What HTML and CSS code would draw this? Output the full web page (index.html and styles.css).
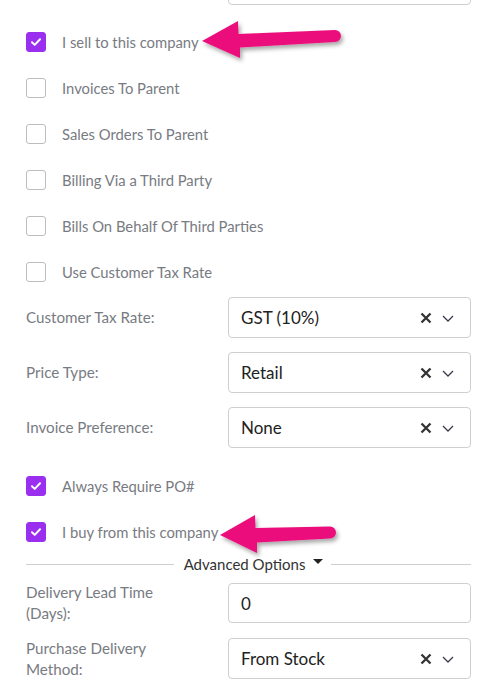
FILE: index.html
```html
<!DOCTYPE html>
<html>
<head>
<meta charset="utf-8">
<link rel="stylesheet" href="styles.css">
</head>
<body>
<div class="form">
  <div class="field field-cut">
    <div class="label"></div>
    <div class="control"></div>
  </div>

  <div class="checks checks-first">
    <label class="check"><span class="box on"><svg viewBox="0 0 20 20"><path d="M5.5 10.2 L8.6 13.2 L14.5 7" /></svg></span><span class="text">I sell to this company</span></label>
    <label class="check"><span class="box"></span><span class="text">Invoices To Parent</span></label>
    <label class="check"><span class="box"></span><span class="text">Sales Orders To Parent</span></label>
    <label class="check"><span class="box"></span><span class="text">Billing Via a Third Party</span></label>
    <label class="check"><span class="box"></span><span class="text">Bills On Behalf Of Third Parties</span></label>
    <label class="check"><span class="box"></span><span class="text">Use Customer Tax Rate</span></label>
  </div>

  <div class="fields fields-first">
    <div class="field">
      <div class="label">Customer Tax Rate:</div>
      <div class="control select"><span class="value">GST (10%)</span><span class="icons"><svg class="clear" viewBox="0 0 12 12"><path d="M1.5 1.5 L10.5 10.5 M10.5 1.5 L1.5 10.5"/></svg><svg class="chev" viewBox="0 0 12 12"><path d="M1 4 L6 9 L11 4"/></svg></span></div>
    </div>
    <div class="field">
      <div class="label">Price Type:</div>
      <div class="control select"><span class="value">Retail</span><span class="icons"><svg class="clear" viewBox="0 0 12 12"><path d="M1.5 1.5 L10.5 10.5 M10.5 1.5 L1.5 10.5"/></svg><svg class="chev" viewBox="0 0 12 12"><path d="M1 4 L6 9 L11 4"/></svg></span></div>
    </div>
    <div class="field">
      <div class="label">Invoice Preference:</div>
      <div class="control select"><span class="value">None</span><span class="icons"><svg class="clear" viewBox="0 0 12 12"><path d="M1.5 1.5 L10.5 10.5 M10.5 1.5 L1.5 10.5"/></svg><svg class="chev" viewBox="0 0 12 12"><path d="M1 4 L6 9 L11 4"/></svg></span></div>
    </div>
  </div>

  <div class="checks checks-second">
    <label class="check"><span class="box on"><svg viewBox="0 0 20 20"><path d="M5.5 10.2 L8.6 13.2 L14.5 7" /></svg></span><span class="text">Always Require PO#</span></label>
    <label class="check"><span class="box on"><svg viewBox="0 0 20 20"><path d="M5.5 10.2 L8.6 13.2 L14.5 7" /></svg></span><span class="text">I buy from this company</span></label>
  </div>

  <div class="divider">
    <span class="line line-left"></span>
    <span class="divider-label">Advanced Options <span class="caret"></span></span>
    <span class="line line-right"></span>
  </div>

  <div class="fields fields-last">
    <div class="field field-short">
      <div class="label label-2">Delivery Lead Time<br>(Days):</div>
      <div class="control input"><span class="value">0</span></div>
    </div>
    <div class="field">
      <div class="label label-2">Purchase Delivery<br>Method:</div>
      <div class="control select"><span class="value">From Stock</span><span class="icons"><svg class="clear" viewBox="0 0 12 12"><path d="M1.5 1.5 L10.5 10.5 M10.5 1.5 L1.5 10.5"/></svg><svg class="chev" viewBox="0 0 12 12"><path d="M1 4 L6 9 L11 4"/></svg></span></div>
    </div>
  </div>
</div>

<svg class="arrows" viewBox="0 0 491 685" width="491" height="685">
  <defs>
    <filter id="sh" x="-20%" y="-40%" width="140%" height="180%">
      <feDropShadow dx="2" dy="3" stdDeviation="2" flood-color="#000" flood-opacity="0.35"/>
    </filter>
  </defs>
  <path filter="url(#sh)" fill="#ec0f7c" d="M202 41 L238 21 L238.5 34 L335 30 A6 6 0 0 1 335 42 L240 47.5 L240 58 Z"/>
  <path filter="url(#sh)" fill="#ec0f7c" d="M220 535 L255 515 L255.5 528 L330 526.5 A6 6 0 0 1 330 538.5 L257 542.5 L257 553 Z"/>
</svg>
</body>
</html>
```

FILE: styles.css
```css
* { box-sizing: border-box; }

html, body {
  margin: 0;
  padding: 0;
  background: #ffffff;
}

body {
  width: 491px;
  height: 685px;
  overflow: hidden;
  position: relative;
  font-family: Lato, "Open Sans", sans-serif;
}

.form {
  padding: 0 20px 0 26px;
  display: flex;
  flex-direction: column;
}

.field {
  display: grid;
  grid-template-columns: 202px 243px;
  align-items: center;
}

.field-cut {
  margin-top: -36px;
}

.control {
  height: 41px;
  border: 1px solid #cfcfcf;
  border-radius: 4px;
  background: #fff;
  display: flex;
  align-items: center;
  padding: 0 16px 0 12px;
}

.field-short .control {
  height: 40px;
}

.label {
  font-size: 15.2px;
  line-height: 21px;
  color: #787b82;
}

.label-2 {
  margin: -2px 0;
}

.value {
  font-size: 17px;
  color: #222;
  flex: 1;
}

.icons {
  display: flex;
  align-items: center;
  gap: 10px;
}

.clear {
  width: 12px;
  height: 12px;
  fill: none;
  stroke: #333;
  stroke-width: 2.3;
}

.chev {
  width: 12px;
  height: 12px;
  fill: none;
  stroke: #3a3a4a;
  stroke-width: 1.3;
}

.checks {
  display: flex;
  flex-direction: column;
  gap: 26px;
}

.checks-first { margin-top: 27px; }
.checks-second { margin-top: 28px; }

.check {
  display: flex;
  align-items: center;
  height: 20px;
}

.box {
  width: 20px;
  height: 20px;
  border: 1px solid #bdbdbd;
  border-radius: 3px;
  background: #fff;
  margin-right: 16px;
  flex: none;
}

.box.on {
  background: #9b2ff0;
  border-color: #9b2ff0;
}

.box svg {
  width: 18px;
  height: 18px;
  display: block;
  fill: none;
  stroke: #fff;
  stroke-width: 2.2;
  stroke-linecap: round;
  stroke-linejoin: round;
}

.text {
  font-size: 14.8px;
  color: #787b82;
}

.fields {
  display: flex;
  flex-direction: column;
  gap: 14px;
}

.fields-first { margin-top: 15px; }
.fields-last { margin-top: 9px; gap: 15px; }

.divider {
  margin-top: 12px;
  height: 20px;
  display: flex;
  align-items: center;
}

.line {
  height: 1px;
  background: #cfcfcf;
}

.line-left { flex: 1 1 8px; }
.line-right { flex: 1 1 0; }

.divider-label {
  font-size: 15px;
  color: #333;
  display: flex;
  align-items: center;
  gap: 8px;
  margin: 0 8px 0 10px;
}

.caret {
  width: 0;
  height: 0;
  border-left: 5px solid transparent;
  border-right: 5px solid transparent;
  border-top: 5px solid #222;
  margin-top: -6px;
}

.arrows {
  position: absolute;
  left: 0;
  top: 0;
  pointer-events: none;
}
```
